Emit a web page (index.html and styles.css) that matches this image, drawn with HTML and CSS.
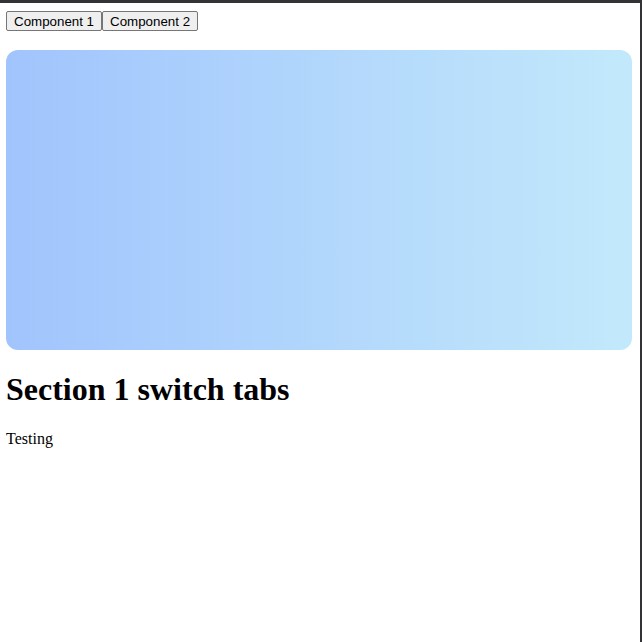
FILE: index.html
```html
<!DOCTYPE html>
<html>
<head>
<meta charset="utf-8">
<link rel="stylesheet" href="styles.css">
</head>
<body>
<div class="frame">
  <div class="tabs"><button class="tab">Component 1</button><button class="tab">Component 2</button></div>
  <div class="hero"></div>
  <h1 class="title">Section 1 switch tabs</h1>
  <p class="text">Testing</p>
</div>
</body>
</html>
```
FILE: styles.css
```css
html, body {
  margin: 0;
  padding: 0;
  background: #fff;
}
.frame {
  box-sizing: border-box;
  width: 642px;
  height: 642px;
  border-top: 3px solid #333335;
  border-right: 2px solid #333335;
  padding: 8px 8px 0 6px;
  font-family: "Liberation Serif", serif;
  overflow: hidden;
}
.tabs {
  display: flex;
  height: 20px;
}
.tab {
  font-family: "Liberation Sans", Arial, sans-serif;
  font-size: 13.333px;
  margin: 0;
  padding: 1px 7px;
  height: 20px;
  box-sizing: border-box;
  background: #efefef;
  border: 1px solid #767676;
  border-radius: 2px;
  color: #000;
}
.hero {
  margin-top: 19px;
  height: 300px;
  border-radius: 12px;
  background: linear-gradient(to right, #a1c4fd, #c2e9fb);
}
.title {
  font-size: 32px;
  font-weight: bold;
  margin: 21.44px 0;
}
.text {
  font-size: 16px;
  margin: 16px 0;
}
```
